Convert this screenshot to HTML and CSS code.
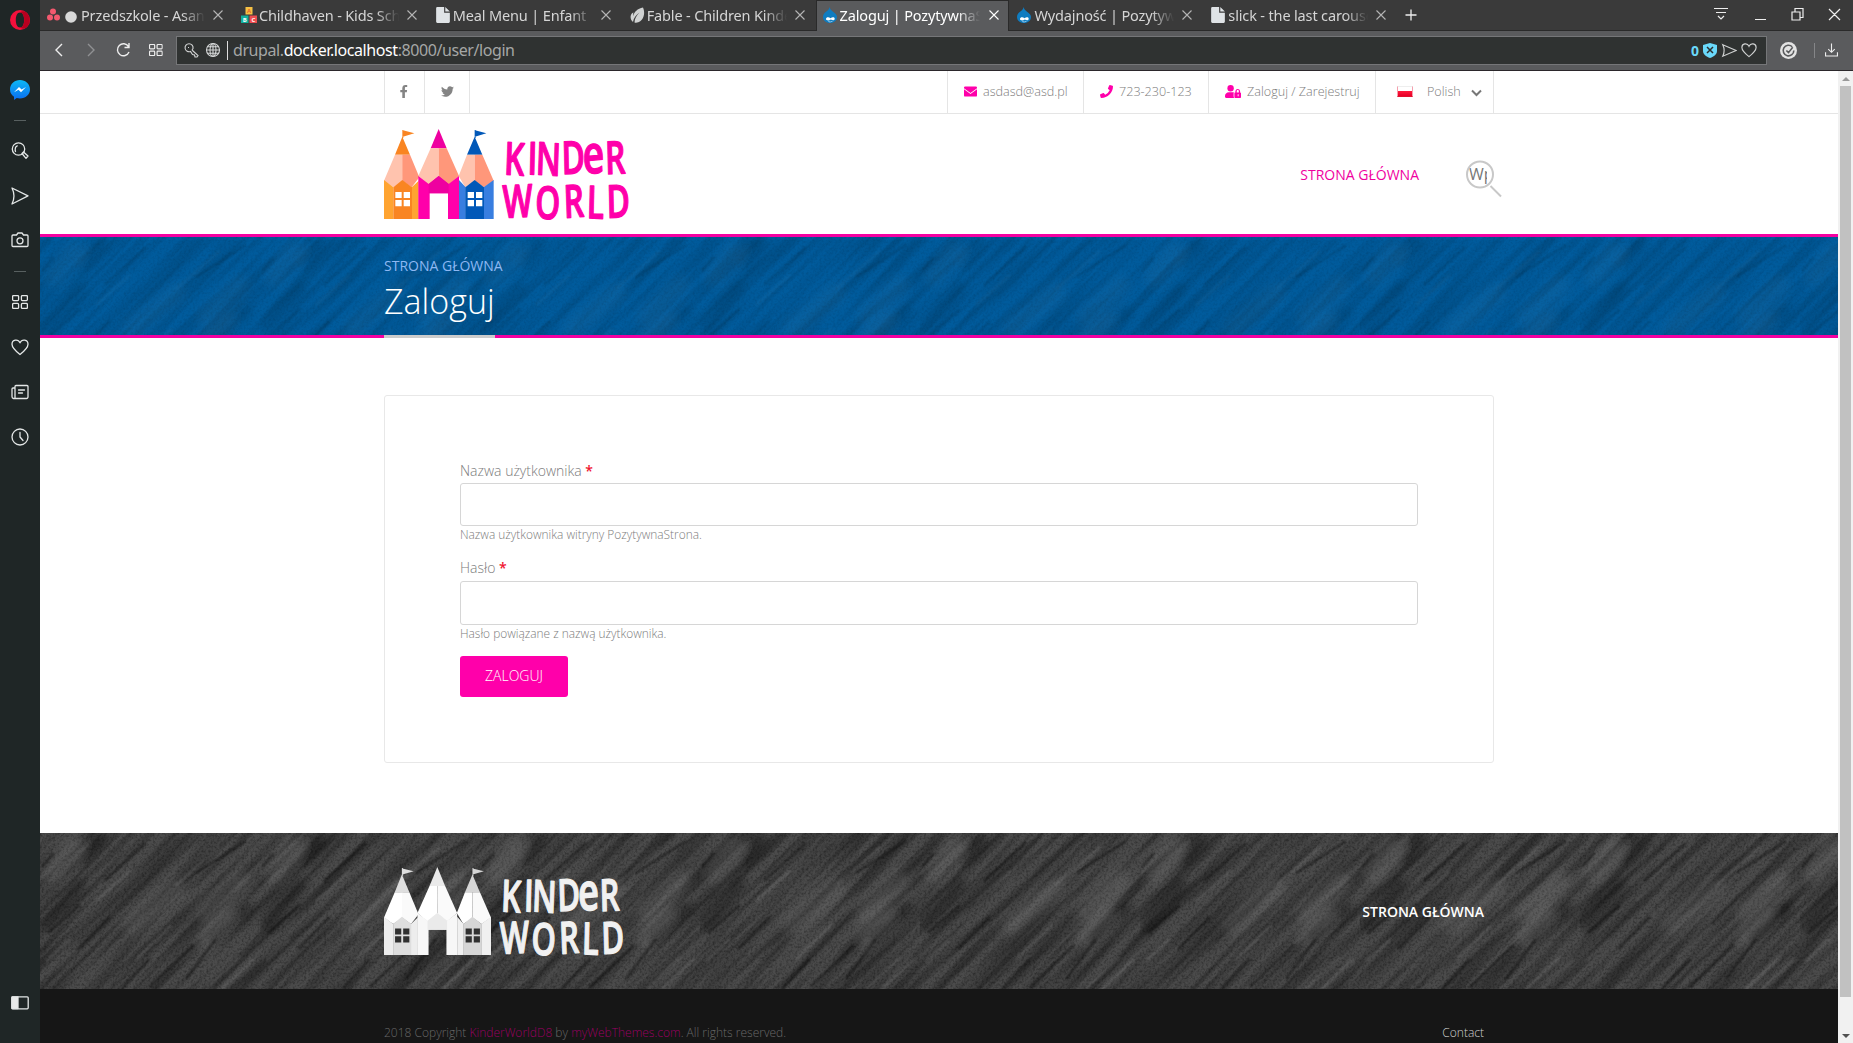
FILE: index.html
```html
<!DOCTYPE html>
<html lang="pl">
<head>
<meta charset="utf-8">
<title>Zaloguj | PozytywnaStrona</title>
<link rel="stylesheet" href="styles.css">
</head>
<body>
<svg class="defs" width="0" height="0">
  <defs>
    <symbol id="close" viewBox="0 0 10 10"><path d="M.5 .5l9 9M9.500 .5l-9 9"/></symbol>
    <symbol id="page" viewBox="0 0 12 14"><path fill="#dfe3e6" d="M1 0h6v5h5v8a1 1 0 0 1-1 1H1a1 1 0 0 1-1-1V1a1 1 0 0 1 1-1zM8 0l4 4H8z"/></symbol>
    <symbol id="drop" viewBox="0 0 14 16"><path fill="#0f7cc0" d="M6.500 0c.5 2.500 2 3.500 3.500 4.700C12.500 6.300 14 8 14 10c0 3.500-3 6-7 6s-7-2.500-7-6c0-2.500 1.300-4 3-5.300C5 3.300 6.200 2.500 6.500 0z"/><path fill="#fff" d="M3 12c0-1.700 2.500-2.400 4.500-.8 2-1.300 4-1.100 4.200.6.2 1.600-2 2-3.800.8-2 1.300-4.900 1.100-4.900-.6zM5 14.200c1.500.6 3.300.6 4.800-.2-.8 1.500-3.800 1.600-4.800.2z"/></symbol>
    <symbol id="heart" viewBox="0 0 18 18"><path d="M9 16.500C4 12.500 1 9.500 1 6.200 1 1.500 7 .5 9 4.800 11 .5 17 1.500 17 6.200c0 3.300-3 6.300-8 10.300z"/></symbol>
    <symbol id="grid" viewBox="0 0 16 14"><rect x=".6" y=".6" width="6" height="5" rx="1"/><rect x="9.400" y=".6" width="6" height="5" rx="1"/><rect x=".6" y="8.400" width="6" height="5" rx="1"/><rect x="9.400" y="8.400" width="6" height="5" rx="1"/></symbol>
    <symbol id="logo" viewBox="42 54 738 276">
      <path class="c-orange" d="M97 80l23 54H75zM97 60h3v24h-3zM99 61l34 9-34 10z"/>
      <path class="c-blue" d="M314 80l23 54h-46zM314 60h3v24h-3zM315 61l34 9-34 10z"/>
      <path class="c-pink2" d="M206 57l24 58h-48z"/>
      <path class="c-skin1" d="M75 134h23v80l-28 18-28-20zM182 115h24v90l-30 20-31-27zM291 134h23v80l-28 18-20-34z"/>
      <path class="c-skin2" d="M97 134h23l28 68-23 30-28-20zM206 115h24l37 83-31 26-30-24zM314 134h23l34 78-29 20-28-20z"/>
      <path class="c-orange2" d="M42 210l28 22v95H42zM125 232l21-20v115h-21z"/>
      <path class="c-orange" d="M70 232l27-22 29 22v95H70z"/>
      <path class="c-blue2" d="M267 210l20 22v95h-20zM341 232l30-22v117h-30z"/>
      <path class="c-blue" d="M286 232l28-22 28 22v95h-56z"/>
      <path class="c-pink" d="M145 198l31 24 30-24 30 24 31-24v129h-33v-77h-55v77h-34z"/>
      <path class="c-pink2" d="M176 222l30-24 30 24v28h-60z"/>
      <path class="c-pane" d="M76 246h19v18H76zM101 246h19v18h-19zM76 270h19v19H76zM101 270h19v19h-19zM293 246h19v18h-19zM318 246h19v18h-19zM293 270h19v19h-19zM318 270h19v19h-19z"/>
      <g class="word">
        <text transform="translate(404 193) scale(.7 1)" x="-4 97 132 246 338 432" rotate="3 2 3 -2 -4 -2">KIND<tspan class="big">e</tspan>R</text>
        <text transform="translate(402 324) scale(.7 1)" x="-4 132 258 354 442" rotate="-2 3 -3 2 -2">WORLD</text>
      </g>
    </symbol>
    <filter id="strokes" x="0" y="0" width="100%" height="100%">
      <feTurbulence type="fractalNoise" baseFrequency=".007 .11" numOctaves="4" seed="21"/>
      <feColorMatrix values="0 0 0 0 0  0 0 0 0 0  0 0 0 0 0  2.600 0 0 0 -.95"/>
    </filter>
    <filter id="grain" x="0" y="0" width="100%" height="100%">
      <feTurbulence type="fractalNoise" baseFrequency=".45" numOctaves="2" seed="3"/>
      <feColorMatrix values="0 0 0 0 0  0 0 0 0 0  0 0 0 0 0  2.400 0 0 0 -1"/>
    </filter>
    <filter id="soft"><feGaussianBlur stdDeviation="1.200"/></filter>
    <filter id="softer" x="-20%" y="-20%" width="140%" height="140%"><feGaussianBlur stdDeviation="5"/></filter>
    <pattern id="chalk" width="220" height="220" patternUnits="userSpaceOnUse">
      <g fill="none" stroke-linecap="round" filter="url(#softer)">
        <path stroke="#000" stroke-opacity=".35" stroke-width="14" d="M40 52L6 92M206 75l-34 30M60 8L44 26"/>
        <path stroke="#fff" stroke-opacity=".09" stroke-width="20" d="M136 56L92 92M200 48l-34 32M34 14L14 40M186 84l-20 20"/>
      </g>
      <g fill="none" filter="url(#soft)">
        <path stroke="#000" stroke-opacity=".45" stroke-width="2.500" d="M106 10L64 48M70 84l-32 32M40 72L8 100M154 112l-44 42M206 8l-50 32M176 106l-30 40M110 126l-28 30M14 20L2 34"/>
        <path stroke="#fff" stroke-opacity=".1" stroke-width="2.500" d="M90 38L56 68M180 14l-44 38M132 92l-36 34M214 126l-32 30M200 124l-34 32M30 106L6 128"/>
      </g>
    </pattern>
  </defs>
</svg>

<aside class="sidebar">
  <svg class="opera" viewBox="0 0 20 20"><path fill="#f5103c" fill-rule="evenodd" d="M10 0a10 10 0 1 0 0 20 10 10 0 0 0 0-20zM10 2.500c2.800 0 4.200 3.500 4.200 7.500s-1.400 7.500-4.200 7.500S5.800 14 5.800 10 7.200 2.500 10 2.500z"/><path fill="#b8001f" d="M10 2.500C12 .8 15 1 17 3a10 10 0 0 1 0 14c-2 2-5 2.200-7 .5 2.800 0 4.200-3.500 4.200-7.500S12.800 2.500 10 2.500z"/></svg>
  <svg class="messenger" viewBox="0 0 20 20"><defs><linearGradient id="msg" x2="0" y2="1"><stop stop-color="#0db8f5"/><stop offset="1" stop-color="#0a6cf0"/></linearGradient></defs><path fill="url(#msg)" d="M10 0c5.600 0 10 4.100 10 9.300s-4.400 9.200-10 9.200c-1.200 0-2.300-.2-3.300-.5L4 20v-3.200A9 9 0 0 1 0 9.300C0 4.100 4.400 0 10 0z"/><path fill="#fff" d="M4 12.300l5-5.300 2.600 2.500L16 7l-5 5.300-2.500-2.500z"/></svg>
  <i class="rule"></i>
  <svg class="side" viewBox="0 0 18 18"><circle cx="7.500" cy="7" r="6.200"/><path d="M4.200 7a3.300 3.300 0 0 1 2-3.200M4.500 9.500a4 4 0 0 1-.3-2M11 11.500l1.500-1.500 4.500 4-2 2.300z"/></svg>
  <svg class="side" viewBox="0 0 18 18"><path d="M1 1l16 7.800L1 17c2.600-5.300 2.600-10.700 0-16z"/></svg>
  <svg class="side camera" viewBox="0 0 18 18"><path d="M2 4h3.500L7 2h4l1.500 2H16a1 1 0 0 1 1 1v9.500a1 1 0 0 1-1 1H2a1 1 0 0 1-1-1V5a1 1 0 0 1 1-1z"/><circle cx="9" cy="9.800" r="3"/></svg>
  <i class="rule"></i>
  <svg class="side grid"><use href="#grid"/></svg>
  <svg class="side"><use href="#heart"/></svg>
  <svg class="side" viewBox="0 0 18 18"><path d="M4 15.500V3.500a1 1 0 0 1 1-1h11a1 1 0 0 1 1 1V14a1.500 1.500 0 0 1-1.500 1.500h-13A2 2 0 0 1 1 13.500V6a1 1 0 0 1 1-1h2M7.500 7h6M7.500 10h4"/></svg>
  <svg class="side" viewBox="0 0 18 18"><circle cx="9" cy="9" r="8"/><path d="M9 4.500V9l3 3.500"/></svg>
  <svg class="side last" viewBox="0 0 18 18"><rect x=".8" y="2.800" width="16.400" height="12" rx="1"/><path fill="#e8eaea" d="M1 3h6v11.600H1z"/></svg>
</aside>

<div class="window">
  <div class="tabs">
    <div class="tab"><svg class="fav" viewBox="0 0 16 16"><g fill="#f4596f"><circle cx="6" cy="4.500" r="3"/><circle cx="3" cy="10.500" r="3"/><circle cx="10" cy="10.500" r="3"/></g></svg><span class="name"><svg class="bullet" viewBox="0 0 12 12"><circle cx="6" cy="6" r="5.800" fill="#d9d9d9"/></svg>Przedszkole - Asana</span><svg class="x"><use href="#close"/></svg></div>
    <div class="tab"><svg class="fav" viewBox="0 0 16 16"><path fill="#f7c244" d="M4.500 0h7v7.500h-7z"/><path fill="#12b09c" d="M0 8.500h7.500V16H0z"/><path fill="#ee4d50" d="M8.500 8.500H16V16H8.500z"/><g class="abc"><text x="8" y="6.200" fill="#e8692c">A</text><text x="3.800" y="14.600">B</text><text x="12.300" y="14.600">C</text></g></svg><span class="name">Childhaven - Kids School</span><svg class="x"><use href="#close"/></svg></div>
    <div class="tab"><svg class="fav"><use href="#page"/></svg><span class="name">Meal Menu | Enfant</span><svg class="x"><use href="#close"/></svg></div>
    <div class="tab"><svg class="fav" viewBox="0 0 16 16"><path fill="#d0d2d2" d="M14 .5C16 5 15.500 11 11.500 14c-2 1.500-4 2-6 1.500 0-4 2-7 5-10C7 8 4.500 11 4 15 .5 12 1 6.500 4.500 5.500c-.5 1.500-.5 2.500-.3 3.500C5 5 8.500 1.500 14 .5z"/></svg><span class="name">Fable - Children Kinder</span><svg class="x"><use href="#close"/></svg></div>
    <div class="tab active"><svg class="fav"><use href="#drop"/></svg><span class="name">Zaloguj | PozytywnaStr</span><svg class="x"><use href="#close"/></svg></div>
    <div class="tab"><svg class="fav"><use href="#drop"/></svg><span class="name">Wydajność | Pozytywna</span><svg class="x"><use href="#close"/></svg></div>
    <div class="tab"><svg class="fav"><use href="#page"/></svg><span class="name">slick - the last carousel</span><svg class="x"><use href="#close"/></svg></div>
    <svg class="plus" viewBox="0 0 12 12"><path d="M6 .5v11M.5 6h11"/></svg>
    <svg class="win" viewBox="0 0 130 16"><path d="M1 2.500h14M3 6.500h10M5 10l3 3 3-3M42 13.500h11M79 6h8v8h-8zM82 6V2.500h8v9h-3M116 3l11 11M127 3l-11 11"/></svg>
  </div>
  <div class="toolbar">
    <svg class="nav" viewBox="0 0 110 16"><path d="M9 2L3 8l6 6"/><path class="dim" d="M35 2l6 6-6 6"/><path d="M75.500 4.500A6 6 0 1 0 76 10M76 1v4.500h-4.500"/><g transform="translate(96 2) scale(.86)"><use href="#grid" width="16" height="14"/></g></svg>
    <div class="address">
      <svg class="keys" viewBox="0 0 38 16"><path d="M8 8l6 5.500-1 1.500h-2l-.5-2-2-.5L6.500 9.500A4 4 0 1 1 9 6.500L8 8M4 5.500h1"/><circle cx="29" cy="8" r="6.500"/><ellipse cx="29" cy="8" rx="3" ry="6.500"/><path d="M22.500 8h13M29 1.500v13M23.500 4.800h11M23.500 11.200h11"/></svg>
      <span class="url">drupal.<b>docker.localhost</b>:8000/user/login</span>
      <span class="count">0</span>
      <svg class="shield" viewBox="0 0 14 15"><path fill="#6ad9fb" d="M7 0l7 2v6c0 3.500-3 5.500-7 7-4-1.500-7-3.500-7-7V2z"/><path stroke="#2b2e2d" stroke-width="1.500" d="M4 4l6 6M10 4l-6 6"/></svg>
      <svg class="mini" viewBox="0 0 18 18"><path d="M2 3l15 6.500L2 16c2-4.300 2-8.700 0-13z"/></svg>
      <svg class="mini"><use href="#heart"/></svg>
    </div>
    <svg class="gauge" viewBox="0 0 16 16"><circle cx="8" cy="8" r="8" fill="#e4e4e4"/><path d="M11.500 4.500A5 5 0 1 0 13 8M6 8l2 2 4-5" fill="none" stroke="#5a5b5d" stroke-width="1.500"/></svg>
    <i class="bar"></i>
    <svg class="down" viewBox="0 0 14 14"><path d="M7 0v9M3.500 6L7 9.500 10.500 6M.6 9.500v3.900h12.800V9.500"/></svg>
  </div>

  <div class="view">
    <div class="site">
      <div class="topbar">
        <div class="inner">
          <a class="cell fb"><svg viewBox="0 0 8 13"><path d="M2.300 13V7.300H.3V5h2V3.300C2.300 1.200 3.500 0 5.400 0l1.800.1v2h-1.100c-1 0-1.200.5-1.200 1.200V5h2.200l-.3 2.300H4.900V13z"/></svg></a>
          <a class="cell tw"><svg viewBox="0 0 512 512"><path d="M459 152c0 4 0 9 0 13 0 139-106 299-299 299-59 0-115-17-161-47 8 1 16 1 25 1 49 0 94-16 130-45-46-1-85-31-98-73 6 1 13 2 20 2 9 0 19-1 28-4-48-10-84-52-84-103v-1c14 8 30 13 47 13-28-19-47-51-47-87 0-19 5-37 14-53 52 64 129 105 216 110-2-8-3-16-3-24 0-58 47-105 105-105 30 0 58 13 77 33 24-5 46-13 67-25-8 24-25 45-46 58 21-2 42-8 60-16-14 21-32 39-52 54z"/></svg></a>
          <a class="cell mail"><svg viewBox="0 0 14 11"><path d="M1.300 0h11.400A1.300 1.300 0 0 1 14 1.300v.6L7 7 0 1.900v-.6A1.300 1.300 0 0 1 1.300 0zM0 3.200l7 5 7-5v6.500a1.300 1.300 0 0 1-1.300 1.300H1.300A1.300 1.300 0 0 1 0 9.700z"/></svg>asdasd@asd.pl</a>
          <a class="cell tel"><svg viewBox="0 0 512 512"><path d="M493 25l-104-24a24 24 0 0 0-27 14l-48 112a24 24 0 0 0 7 28l61 50a371 371 0 0 1-177 177l-50-61a24 24 0 0 0-28-7L15 362a24 24 0 0 0-14 27l24 104a24 24 0 0 0 23 19c256 0 464-207 464-464a24 24 0 0 0-19-23z"/></svg>723-230-123</a>
          <a class="cell log"><svg viewBox="0 0 16 13"><circle cx="5.600" cy="3.200" r="3.200"/><path d="M8.800 7.200H4C1.500 7.200 0 9 0 11v.8C0 12.500.5 13 1.200 13h7.900C8.500 12 8.500 8.500 8.800 7.200z"/><path fill-rule="evenodd" d="M10 7.500h.4V6a2.400 2.400 0 0 1 4.700 0v1.500h.1c.5 0 .8.300.8.8V12c0 .6-.4 1-1 1h-4.600c-.6 0-1-.4-1-1V8.300c0-.5.200-.8.600-.8zm1.700 0h2.100V6c0-1.300-2.100-1.300-2.100 0zm1 1.800v2h.9v-2z"/></svg>Zaloguj / Zarejestruj</a>
          <a class="cell lang"><i class="flag"></i>Polish<svg viewBox="0 0 11 8"><path d="M1 1.500l4.500 4.500L10 1.500"/></svg></a>
        </div>
      </div>
      <header class="head inner">
        <svg class="logo color"><use href="#logo"/></svg>
        <a class="menu">STRONA GŁÓWNA</a>
        <div class="search"><span>Wpisz</span><svg viewBox="0 0 36 38"><circle cx="14" cy="14.500" r="13"/><path d="M24.500 26L35 36.500"/></svg></div>
      </header>
      <section class="banner">
        <svg class="texture"><g transform="rotate(-45 900 50)"><rect x="-100" y="-900" width="2000" height="2000" filter="url(#strokes)" opacity=".12"/></g><rect width="100%" height="100%" filter="url(#grain)" opacity=".08"/><rect width="100%" height="100%" fill="url(#chalk)" opacity=".32"/></svg>
        <div class="inner"><a class="crumb">STRONA GŁÓWNA</a><h1>Zaloguj</h1></div>
      </section>
      <main class="inner">
        <form class="card">
          <label>Nazwa użytkownika <b>*</b></label>
          <input type="text">
          <p>Nazwa użytkownika witryny PozytywnaStrona.</p>
          <label>Hasło <b>*</b></label>
          <input type="password">
          <p>Hasło powiązane z nazwą użytkownika.</p>
          <button type="button">ZALOGUJ</button>
        </form>
      </main>
      <footer>
        <div class="upper">
          <svg class="texture"><g transform="rotate(-45 900 80)"><rect x="-100" y="-900" width="2000" height="2000" filter="url(#strokes)" opacity=".34"/></g><rect width="100%" height="100%" filter="url(#grain)" opacity=".3"/><rect width="100%" height="100%" fill="url(#chalk)"/></svg>
          <div class="inner row"><svg class="logo mono"><use href="#logo"/></svg><a>STRONA GŁÓWNA</a></div>
        </div>
        <div class="lower"><div class="inner row"><span>2018 Copyright <a>KinderWorldD8</a> by <a>myWebThemes.com</a>. All rights reserved.</span><a class="contact">Contact</a></div></div>
      </footer>
    </div>
    <div class="scroll"><i class="up"></i><i class="thumb"></i><i class="dn"></i></div>
  </div>
</div>
</body>
</html>
```
FILE: styles.css
```css
* { box-sizing: border-box; }
body { margin: 0; width: 1853px; height: 1043px; overflow: hidden; display: flex; background: #fff; font-family: "Open Sans", sans-serif; font-weight: 300; }
.defs { position: absolute; }
svg { flex: none; display: block; }

/* Browser sidebar */
.sidebar { width: 40px; background: #1f2626; display: flex; flex-direction: column; align-items: center; padding: 10px 1px 31px 0; }
.opera { width: 20px; height: 20px; }
.messenger { width: 20px; height: 20px; margin-top: 50px; }
.rule { width: 12px; height: 1px; background: #586060; flex: none; margin: 20px 0 21px; }
.side { width: 18px; height: 18px; margin-bottom: 27px; fill: none; stroke: #e4e7e7; stroke-width: 1.3; stroke-linejoin: round; stroke-linecap: round; }
.side.camera { margin-top: -1px; }
.side + .rule { margin: -5px 0 22px; }
.side.grid { width: 16px; height: 14px; margin-bottom: 29px; }
.rule + .side.grid { margin-top: 1px; }
.side.last { margin: auto 0 0; }

.window { flex: 1; min-width: 0; display: flex; flex-direction: column; }

/* Tabs */
.tabs { height: 31px; background: #3a3a3a; border-bottom: 1px solid #2a2a2a; display: flex; align-items: center; font: 400 14.5px "Noto Sans", sans-serif; color: #d5d5d5; }
.tab { width: 193.900px; height: 31px; display: flex; align-items: center; padding: 0 11px 0 7px; flex: none; }
.tab.active { background: #5a5b5d; color: #fff; border: solid #2a2a2a; border-width: 1px 1px 0; padding: 0 9px 2px 5px; }
.fav { width: 16px; height: 16px; }
.name { display: flex; align-items: center; width: 143px; margin-left: 2px; overflow: hidden; white-space: pre; letter-spacing: -.15px; -webkit-mask-image: linear-gradient(90deg, #000 82%, transparent 98%); mask-image: linear-gradient(90deg, #000 82%, transparent 98%); }
.bullet { width: 12px; height: 12px; margin: 3px 4px 0 0; }
.abc { font: 700 6px "Open Sans", sans-serif; fill: #fff; text-anchor: middle; }
.x { width: 10px; height: 10px; margin-left: auto; stroke: #b5b5b5; stroke-width: 1.1; }
.active .x { stroke: #fff; }
.plus { width: 12px; height: 12px; margin-left: 8px; fill: none; stroke: #eee; stroke-width: 1.3; }
.win { width: 130px; height: 16px; margin: -2px 10px 0 auto; fill: none; stroke: #eee; stroke-width: 1.2; }

/* Address toolbar */
.toolbar { height: 40px; background: #5a5b5d; border-bottom: 1px solid #2b272b; display: flex; align-items: center; padding: 0 15px 1px 13px; }
.nav { width: 110px; height: 16px; margin-right: 13px; fill: none; stroke: #eee; stroke-width: 1.4; }
.nav .dim { stroke: #909193; }
.address { width: 1591px; height: 29px; border: 1px solid #757678; background: #2f3231; display: flex; align-items: center; padding: 0 9px 0 7px; }
.keys { width: 38px; height: 16px; fill: none; stroke: #d4d6d6; stroke-width: 1.1; }
.url { border-left: 1px solid #ddd; height: 19px; margin-left: 5px; padding-left: 5px; font: 400 16px/18px "Noto Sans", sans-serif; letter-spacing: -.42px; color: #a5a7a6; }
.url b { font-weight: 400; color: #fff; }
.count { margin-left: auto; font: 700 14px "Noto Sans", sans-serif; color: #6ad9fb; }
.shield { width: 14px; height: 15px; margin: 0 2px 0 4px; fill: none; }
.mini { width: 16px; height: 16px; margin-left: 2px; fill: none; stroke: #cfd1d1; stroke-width: 1.3; }
.mini + .mini { margin-left: 4px; }
.gauge { width: 17px; height: 17px; margin-left: 13px; }
.bar { width: 1px; height: 15px; background: #858688; margin-left: 17px; }
.down { width: 13px; height: 14px; margin-left: auto; fill: none; stroke: #eee; stroke-width: 1.2; }

/* Site */
.view { flex: 1; display: flex; min-height: 0; }
.site { flex: 1; display: flex; flex-direction: column; overflow: hidden; color: #7c7c7c; }
.inner { width: 1110px; margin: 0 auto; }
.topbar { height: 43px; border-bottom: 1px solid #e5e5e5; font-size: 12.6px; }
.topbar .inner { height: 42px; display: flex; border: solid #e5e5e5; border-width: 0 1px; }
.cell { display: flex; align-items: center; padding-left: 16px; border-left: 1px solid #e5e5e5; padding-bottom: 1px; }
.cell svg { fill: #f0a; margin-right: 7px; }
.fb { width: 39px; border: 0; }
.fb svg { width: 8px; height: 13px; margin-left: -1px; fill: #848484; }
.tw { width: 46px; border-right: 1px solid #e5e5e5; }
.tw svg { width: 13px; height: 13px; fill: #848484; }
.mail { width: 136px; margin-left: auto; }
.mail svg { width: 13px; height: 11px; margin-right: 6px; }
.tel { width: 125px; }
.tel svg { width: 13px; height: 13px; margin-right: 6px; }
.log { width: 167px; }
.log svg { width: 16px; height: 13px; margin-right: 6px; }
.lang { width: 118px; padding-left: 21px; }
.flag { width: 16px; height: 11px; margin-right: 14px; border: 1px solid; border-color: #eee #f5a0ae #e2102e; background: linear-gradient(#fff 45%, #ff1a3c 45%, #e80028); }
.lang svg { width: 11px; height: 8px; margin: 2px 0 0 10px; fill: none; stroke: #777; stroke-width: 2; }

.head { height: 120px; display: flex; }
.logo { width: 246px; height: 92px; margin-top: 14px; }
.color { --o: #f98522; --o2: #ffa431; --b: #0158b8; --b2: #387ee0; --p: #f0a; --p2: #ee00a0; --s1: #ffc3ae; --s2: #ff977a; --w: #fff; --t: #f0a; }
.mono { --o: #dedede; --o2: #ededed; --b: #d6d6d6; --b2: #f0f0f0; --p: #f7f7f7; --p2: #eaeaea; --s1: #fff; --s2: #fafafa; --w: #303030; --t: #f1f1f1; width: 240px; height: 90px; margin: 0; }
.c-orange { fill: var(--o); } .c-orange2 { fill: var(--o2); }
.c-blue { fill: var(--b); } .c-blue2 { fill: var(--b2); }
.c-pink { fill: var(--p); } .c-pink2 { fill: var(--p2); }
.c-skin1 { fill: var(--s1); } .c-skin2 { fill: var(--s2); }
.c-pane { fill: var(--w); }
.word { font: 600 136px "Open Sans", sans-serif; fill: var(--t); stroke: var(--t); stroke-width: 4; stroke-linejoin: round; }
.word .big { font-size: 160px; }
.menu { margin: 51px 1px 0 auto; font-size: 14px; line-height: 20px; font-weight: 400; color: #f0009f; }
.search { position: relative; width: 36px; height: 38px; margin: 46px -8px 0 46px; }
.search span { position: absolute; left: 3px; top: 5px; width: 18px; height: 20px; overflow: hidden; font-size: 16px; line-height: 19px; font-weight: 400; color: #777; }
.search svg { position: absolute; inset: 0; fill: none; stroke: #c8c8c8; stroke-width: 2; }

.banner { position: relative; height: 104px; border: solid #f400a1; border-width: 3px 0; background: #005b9c; }
.texture { position: absolute; left: 0; top: 0; width: 100%; height: 100%; }
.banner .inner { position: relative; padding-top: 19px; }
.crumb { display: block; font-size: 14px; line-height: 20px; font-weight: 400; color: #8db8f3; }
h1 { display: inline-block; margin: 0; font-size: 34px; line-height: 50px; height: 62px; font-weight: 300; color: #fff; border-bottom: 3px solid #ccc; }

.card { margin-top: 57px; height: 368px; border: 1px solid #e8e8e8; border-radius: 3px; padding: 65px 75px; display: flex; flex-direction: column; align-items: flex-start; font-size: 14px; }
label { line-height: 20px; margin-bottom: 2px; }
label b { color: #f0142f; font-weight: 600; }
.card input { width: 100%; height: 44px; border: 1px solid #d6d6d6; border-radius: 3px; background: #fff; }
.card p { margin: 0 0 17px; font-size: 11.9px; line-height: 15px; height: 15px; padding-top: 1px; }
.card p + label { margin-bottom: 3px; }
.card button { width: 108px; height: 42px; border: 0; border-radius: 3px; background: #f0a; color: #fff; font: 300 14px "Open Sans", sans-serif; margin-top: -1px; padding-bottom: 2px; }

footer { margin-top: 70px; flex: 1; display: flex; flex-direction: column; }
.upper { position: relative; height: 156px; background: #4b4b4b; color: #fff; }
.row { position: relative; display: flex; justify-content: space-between; padding-right: 10px; }
.upper .row { padding-top: 33px; }
.upper a { font-size: 14px; line-height: 20px; font-weight: 600; margin-top: 36px; }
.lower { flex: 1; background: #161616; font-size: 12px; line-height: 20px; color: #686868; }
.lower .row { padding-top: 34px; }
.lower a { color: #9a0062; }
.lower .contact { color: #d0d0d0; }

.scroll { width: 15px; background: #f1f1f1; display: flex; flex-direction: column; align-items: center; padding: 6px 0 5px; }
.up, .dn { border: 4px solid transparent; }
.up { border-top: 0; border-bottom-color: #999; margin-bottom: 5px; }
.thumb { width: 11px; height: 911px; background: #c1c1c1; }
.dn { border-bottom: 0; border-top-color: #505050; margin-top: auto; }
```
